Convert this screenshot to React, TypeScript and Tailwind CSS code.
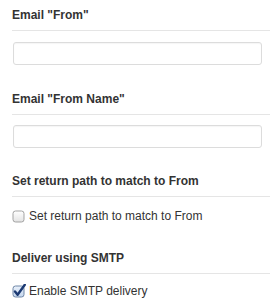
import React from 'react';

const Heading = ({ children, className = '' }: { children: React.ReactNode; className?: string }) => (
  <div className={`border-b border-[#e5e5e5] pb-[6px] text-[12px] font-bold leading-[18px] text-[#333] ${className}`}>
    {children}
  </div>
);

const TextInput = ({ className = '' }: { className?: string }) => (
  <input
    type="text"
    className={`block h-[23px] w-[249px] rounded-[3px] border border-[#dcdcdc] bg-white shadow-[inset_0_1px_1px_rgba(0,0,0,0.04)] outline-none ${className}`}
  />
);

const Box = ({ checked }: { checked: boolean }) => (
  <svg width="14" height="14" viewBox="0 0 14 14" className="shrink-0">
    <defs>
      <linearGradient id={checked ? 'gc' : 'gu'} x1="0" y1="0" x2="0" y2="1">
        <stop offset="0" stopColor={checked ? '#e9f1fb' : '#ffffff'} />
        <stop offset="1" stopColor={checked ? '#c4d6ee' : '#e3e3e3'} />
      </linearGradient>
    </defs>
    <rect x="1" y="2" width="11" height="11" rx="2.5" fill={`url(#${checked ? 'gc' : 'gu'})`} stroke={checked ? '#6f86a6' : '#a3a3a3'} strokeWidth="1" />
    {checked && (
      <path d="M3 7.4 L5.6 10.8 L12.8 0.8" fill="none" stroke="#1c3a73" strokeWidth="2.4" strokeLinecap="round" strokeLinejoin="round" />
    )}
  </svg>
);

const CheckRow = ({ label, checked, className = '' }: { label: string; checked: boolean; className?: string }) => (
  <label className={`flex items-center gap-[3px] text-[12px] leading-[18px] text-[#333] ${className}`}>
    <Box checked={checked} />
    <span>{label}</span>
  </label>
);

export default function App() {
  return (
    <div className="h-[308px] w-[270px] overflow-hidden bg-white pl-[12px] pt-[6px] font-['Liberation_Sans',Arial,sans-serif]">
      <Heading>Email "From"</Heading>
      <TextInput className="ml-[1px] mt-[11px]" />

      <Heading className="mt-[25px]">Email "From Name"</Heading>
      <TextInput className="ml-[1px] mt-[10px]" />

      <Heading className="mt-[24px]">Set return path to match to From</Heading>
      <CheckRow className="mt-[10px]" label="Set return path to match to From" checked={false} />

      <Heading className="mt-[24px]">Deliver using SMTP</Heading>
      <CheckRow className="mt-[8px]" label="Enable SMTP delivery" checked />
    </div>
  );
}
